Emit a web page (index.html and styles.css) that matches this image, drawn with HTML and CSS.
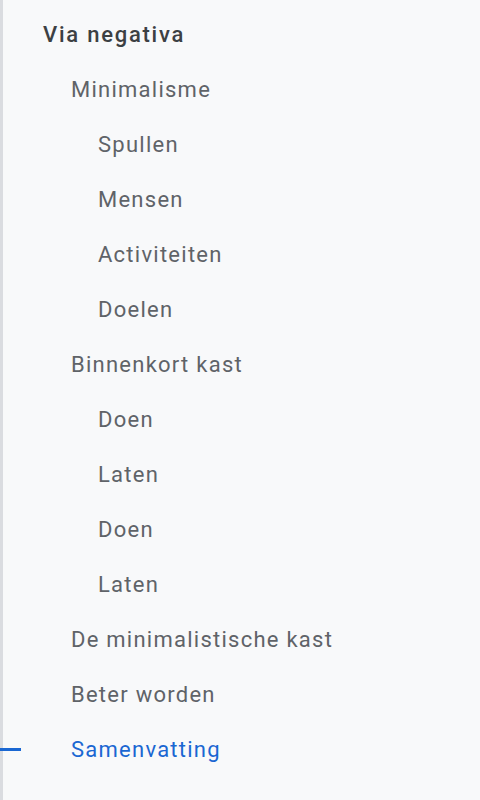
FILE: index.html
```html
<!DOCTYPE html>
<html>
<head>
<meta charset="utf-8">
<link rel="stylesheet" href="styles.css">
</head>
<body>
<nav class="toc">
  <ul class="list">
    <li class="item lvl0 title">Via negativa</li>
    <li class="item lvl1">Minimalisme</li>
    <li class="item lvl2">Spullen</li>
    <li class="item lvl2">Mensen</li>
    <li class="item lvl2">Activiteiten</li>
    <li class="item lvl2">Doelen</li>
    <li class="item lvl1">Binnenkort kast</li>
    <li class="item lvl2">Doen</li>
    <li class="item lvl2">Laten</li>
    <li class="item lvl2">Doen</li>
    <li class="item lvl2">Laten</li>
    <li class="item lvl1">De minimalistische kast</li>
    <li class="item lvl1">Beter worden</li>
    <li class="item lvl1 active">Samenvatting</li>
  </ul>
</nav>
</body>
</html>
```
FILE: styles.css
```css
html, body {
  margin: 0;
  padding: 0;
  height: 100%;
  background: #f8f9fa;
}
body {
  font-family: Roboto, "Noto Sans", sans-serif;
}
.toc {
  min-height: 100%;
  border-left: 3px solid #dadce0;
  box-sizing: border-box;
  padding-top: 7px;
}
.list {
  list-style: none;
  margin: 0;
  padding: 0;
}
.item {
  position: relative;
  height: 55px;
  line-height: 55px;
  font-size: 22px;
  letter-spacing: 1.25px;
  color: #5f6368;
  white-space: nowrap;
}
.lvl0 { padding-left: 40px; }
.lvl1 { padding-left: 68px; }
.lvl2 { padding-left: 95px; }
.title {
  color: #3c4043;
  font-weight: 500;
  letter-spacing: 1.75px;
}
.active {
  color: #1a67d2;
}
.active::before {
  content: "";
  position: absolute;
  left: -3px;
  top: 26px;
  width: 21px;
  height: 3px;
  background: #1a67d2;
}
```
